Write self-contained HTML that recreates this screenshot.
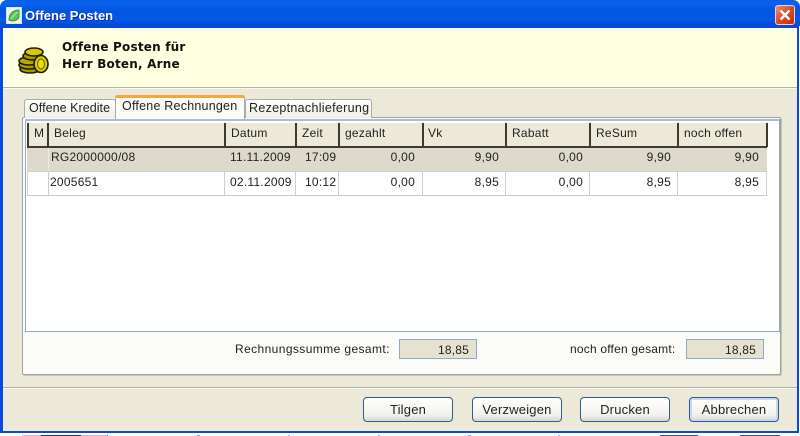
<!DOCTYPE html>
<html><head><meta charset="utf-8"><title>Offene Posten</title>
<style>
html,body{margin:0;padding:0;background:#fff}
#r{position:relative;width:800px;height:436px;overflow:hidden;background:#fff;font:12px "Liberation Sans",sans-serif;color:#222}
#r div{position:absolute;box-sizing:border-box}
.t{white-space:nowrap;line-height:14px}
.sep{width:2px;top:123px;height:24px;background:#3c3a32}
.g{width:1px;background:#cfcfcf}
.c{top:0;height:14px;white-space:nowrap;line-height:14px;letter-spacing:.25px}
.rt{text-align:right}
.btn{top:397px;width:90px;height:25px;border:1px solid #2f5f86;border-radius:4px;background:linear-gradient(#fff,#f4f3ee 70%,#dcd8cb);text-align:center;line-height:23px;font-size:13px;letter-spacing:.2px;color:#222}
</style></head><body>
<div id="r">
<!-- frame -->
<div style="left:0;top:0;width:800px;height:28px;border-radius:7px 7px 0 0;background:linear-gradient(#0a5fe0 0,#0a63ee 3px,#0355e0 10px,#0358e6 20px,#0349c8 27px)"></div>
<div style="left:0;top:26px;width:800px;height:410px;background:#fff"></div>
<div style="left:0;top:26px;width:799px;height:407px;background:#0a4ad6"></div>
<div style="left:3px;top:28px;width:794px;height:403px;background:#ECE9D8"></div>
<!-- desktop remnants at bottom -->
<div style="left:22px;top:435px;width:85px;height:1px;background:#e8b0a8"></div>
<div style="left:41px;top:435px;width:40px;height:1px;background:#333"></div>
<div style="left:107px;top:435px;width:1px;height:1px;background:#777"></div>
<div style="left:197px;top:435px;width:3px;height:1px;background:#9ab"></div>
<div style="left:288px;top:435px;width:2px;height:1px;background:#9ab"></div>
<div style="left:378px;top:435px;width:2px;height:1px;background:#9ab"></div>
<div style="left:468px;top:435px;width:3px;height:1px;background:#9ab"></div>
<div style="left:558px;top:435px;width:2px;height:1px;background:#9ab"></div>
<div style="left:660px;top:435px;width:38px;height:1px;background:#555"></div>
<div style="left:740px;top:435px;width:40px;height:1px;background:#555"></div>
<!-- title -->
<svg style="position:absolute;left:6px;top:7px" width="16" height="17" viewBox="0 0 16 17"><rect x=".5" y=".5" width="15" height="16" fill="#f2f7ee" stroke="#dfe8e0"/><path d="M3 13C3 8 6 3 13 3L13 9C13 12 10 14 6 14Z" fill="#5cc45c" stroke="#2f9a3f"/><path d="M5 12C7 9 9 7 12 5" stroke="#c8efc0" fill="none"/></svg>
<div class="t" style="left:25px;top:9px;font:bold 13px 'Liberation Sans',sans-serif;color:#fff;text-shadow:1px 1px 0 #0a2f9c;line-height:14px">Offene Posten</div>
<!-- close -->
<div style="left:775px;top:5px;width:20px;height:20px;border:1px solid #f2d0c4;border-radius:3px;background:linear-gradient(135deg,#ef8f6c,#d9492b 50%,#bf3012)"></div>
<svg style="position:absolute;left:775px;top:5px" width="20" height="20"><path d="M5.5 5.5L14.5 14.5M14.5 5.5L5.5 14.5" stroke="#fff" stroke-width="2.4"/></svg>
<!-- cream header -->
<div style="left:3px;top:28px;width:794px;height:59px;background:#FFFFE1"></div>
<div style="left:3px;top:87px;width:794px;height:1px;background:#b5b3a7"></div>
<div style="left:3px;top:88px;width:794px;height:1px;background:#fafaf5"></div>
<svg style="position:absolute;left:17px;top:44px" width="34" height="30" viewBox="0 0 34 30">
<g stroke="#1c1c00" stroke-width="1.6">
<ellipse cx="13" cy="25" rx="10" ry="4" fill="#a89800"/><ellipse cx="12" cy="21" rx="10" ry="4" fill="#a89800"/><ellipse cx="12" cy="17" rx="10" ry="4" fill="#b8a600"/>
<ellipse cx="15" cy="12" rx="9" ry="4" fill="#a89800"/><ellipse cx="17" cy="8" rx="9" ry="4" fill="#d8c800"/>
<ellipse cx="24" cy="20" rx="7" ry="8.5" fill="#d8cb00"/></g>
<ellipse cx="24" cy="20" rx="3.5" ry="5" fill="#e9dc10" stroke="#6d6400"/></svg>
<div class="t" style="left:62px;top:39px;font:bold 12px/16.5px 'DejaVu Sans',sans-serif;letter-spacing:.2px;color:#111;white-space:nowrap">Offene Posten für<br>Herr Boten, Arne</div>
<!-- panel -->
<div style="left:22px;top:117px;width:759px;height:258px;border:1px solid #9fa3a0;border-radius:2px;background:#fbfbf8;box-shadow:1px 1px 0 #c8c5b5"></div>
<!-- tabs -->
<div style="left:24px;top:99px;width:92px;height:19px;border:1px solid #a9aca6;border-bottom:0;border-radius:3px 3px 0 0;background:linear-gradient(#fff,#f0efe6)"></div>
<div class="t" style="left:29px;top:101px;font-size:12.5px;letter-spacing:.05px">Offene Kredite</div>
<div style="left:245px;top:99px;width:127px;height:19px;border:1px solid #a9aca6;border-bottom:0;border-radius:3px 3px 0 0;background:linear-gradient(#fff,#f0efe6)"></div>
<div class="t" style="left:249px;top:101px;font-size:12.5px;letter-spacing:.3px">Rezeptnachlieferung</div>
<div style="left:115px;top:95px;width:130px;height:24px;border:1px solid #a9aca6;border-bottom:0;border-radius:3px 3px 0 0;background:#fbfbf8"></div>
<div style="left:115px;top:95px;width:130px;height:3px;background:#f3a73c;border-radius:3px 3px 0 0"></div>
<div class="t" style="left:122px;top:99px;font-size:12.5px;letter-spacing:.22px">Offene Rechnungen</div>
<!-- table box -->
<div style="left:25px;top:119px;width:755px;height:213px;border:1px solid #8fa9c9;border-top:2px solid #a8bdd6;background:#fff"></div>
<!-- header -->
<div style="left:27px;top:123px;width:740px;height:24px;background:#ECE9D8"></div>
<div style="left:27px;top:146px;width:740px;height:2px;background:#3c3a32"></div>
<div class="sep" style="left:27px"></div><div class="sep" style="left:47px"></div><div class="sep" style="left:224px"></div><div class="sep" style="left:295px"></div><div class="sep" style="left:338px"></div><div class="sep" style="left:422px"></div><div class="sep" style="left:505px"></div><div class="sep" style="left:589px"></div><div class="sep" style="left:677px"></div><div class="sep" style="left:766px"></div>
<div class="t" style="left:34px;top:126px;letter-spacing:.2px">M</div>
<div class="t" style="left:54px;top:126px;letter-spacing:.25px">Beleg</div>
<div class="t" style="left:231px;top:126px;letter-spacing:.25px">Datum</div>
<div class="t" style="left:302px;top:126px;letter-spacing:.25px">Zeit</div>
<div class="t" style="left:345px;top:126px;letter-spacing:.25px">gezahlt</div>
<div class="t" style="left:428px;top:126px;letter-spacing:.25px">Vk</div>
<div class="t" style="left:512px;top:126px;letter-spacing:.25px">Rabatt</div>
<div class="t" style="left:596px;top:126px;letter-spacing:.25px">ReSum</div>
<div class="t" style="left:684px;top:126px;letter-spacing:.25px">noch offen</div>
<!-- rows -->
<div style="left:27px;top:148px;width:740px;height:23px;background:#DDDACB"></div>
<div style="left:27px;top:171px;width:740px;height:1px;background:#cfcfcf"></div>
<div style="left:27px;top:195px;width:740px;height:1px;background:#c9c9c9"></div>
<div class="g" style="left:27px;top:172px;height:23px"></div><div class="g" style="left:48px;top:172px;height:23px"></div><div class="g" style="left:224px;top:172px;height:23px"></div><div class="g" style="left:295px;top:172px;height:23px"></div><div class="g" style="left:338px;top:172px;height:23px"></div><div class="g" style="left:422px;top:172px;height:23px"></div><div class="g" style="left:505px;top:172px;height:23px"></div><div class="g" style="left:589px;top:172px;height:23px"></div><div class="g" style="left:677px;top:172px;height:23px"></div><div class="g" style="left:766px;top:172px;height:23px"></div>
<div style="left:48px;top:148px;width:1px;height:23px;background:#eeecdf"></div>
<div style="left:0;top:150px;width:800px;height:14px">
<div class="c" style="left:51px">RG2000000/08</div><div class="c" style="left:230px">11.11.2009</div><div class="c" style="left:305px">17:09</div>
<div class="c rt" style="right:385px">0,00</div><div class="c rt" style="right:301px">9,90</div><div class="c rt" style="right:217px">0,00</div><div class="c rt" style="right:129px">9,90</div><div class="c rt" style="right:41px">9,90</div></div>
<div style="left:0;top:175px;width:800px;height:14px">
<div class="c" style="left:50px">2005651</div><div class="c" style="left:230px">02.11.2009</div><div class="c" style="left:305px">10:12</div>
<div class="c rt" style="right:385px">0,00</div><div class="c rt" style="right:301px">8,95</div><div class="c rt" style="right:217px">0,00</div><div class="c rt" style="right:129px">8,95</div><div class="c rt" style="right:41px">8,95</div></div>
<!-- summary -->
<div class="t" style="left:235px;top:342px;letter-spacing:.4px">Rechnungssumme gesamt:</div>
<div style="left:399px;top:339px;width:78px;height:20px;border:1px solid #8fa9c9;background:#E6E2D0;text-align:right;padding-right:7px;line-height:20px;letter-spacing:.2px">18,85</div>
<div class="t" style="left:570px;top:342px;letter-spacing:.2px">noch offen gesamt:</div>
<div style="left:686px;top:339px;width:78px;height:20px;border:1px solid #8fa9c9;background:#E6E2D0;text-align:right;padding-right:7px;line-height:20px;letter-spacing:.2px">18,85</div>
<!-- separator -->
<div style="left:3px;top:387px;width:794px;height:1px;background:#b5b3a7"></div>
<div style="left:3px;top:388px;width:794px;height:1px;background:#fafaf5"></div>
<!-- buttons -->
<div class="btn" style="left:363px">Tilgen</div>
<div class="btn" style="left:472px">Verzweigen</div>
<div class="btn" style="left:580px">Drucken</div>
<div class="btn" style="left:689px;border-color:#2a5a9c;box-shadow:inset 0 0 0 2px #c9d8ee">Abbrechen</div>
</div>
</body></html>
